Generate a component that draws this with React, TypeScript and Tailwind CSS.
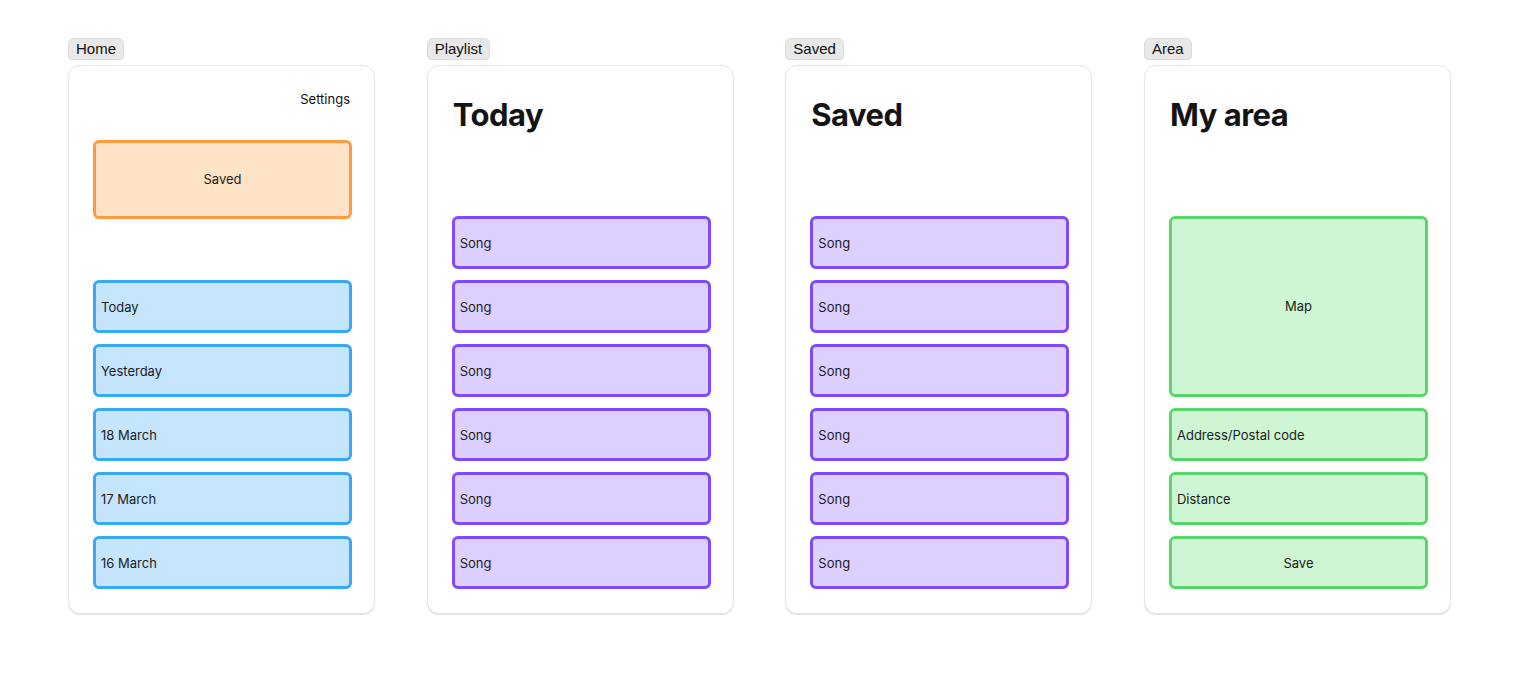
const font = { fontFamily: "Inter, 'Noto Sans', sans-serif" }

function Label({ text }: { text: string }) {
  return (
    <div
      className="self-start h-[22px] px-[7px] flex items-center rounded-t-[6px] rounded-b-[4px] bg-[#e8e8e8] border border-[#dcdcdc] text-[15px] text-[#111]"
      style={{ fontFamily: "'Liberation Sans', Arial, sans-serif" }}
    >
      {text}
    </div>
  )
}

function Box({
  children,
  tone,
  className = "",
}: {
  children: React.ReactNode
  tone: "orange" | "blue" | "purple" | "green"
  className?: string
}) {
  const tones = {
    orange: "border-[#ff9b3d] bg-[#ffe3c6]",
    blue: "border-[#36a9f9] bg-[#c4e5fd]",
    purple: "border-[#8048ff] bg-[#ddd0ff]",
    green: "border-[#5ad66a] bg-[#cef5d4]",
  }
  return (
    <div className={`border-[3px] rounded-[6px] text-[13px] text-[#1c1c1c] flex items-center ${tones[tone]} ${className}`}>
      {children}
    </div>
  )
}

function Row({ text, tone }: { text: string; tone: "blue" | "purple" | "green" }) {
  return (
    <Box tone={tone} className="h-[53px] px-[5px] pt-[2px]">
      {text}
    </Box>
  )
}

function Frame({ label, children }: { label: string; children: React.ReactNode }) {
  return (
    <div className="flex flex-col gap-[5px] w-[307px] shrink-0">
      <Label text={label} />
      <div className="h-[549px] rounded-[12px] border border-[#e6e6e6] shadow-[0_1px_1px_rgba(0,0,0,0.12)] bg-white pl-[24px] pr-[22px] pt-[25px] pb-[24px] flex flex-col" style={font}>
        {children}
      </div>
    </div>
  )
}

function Heading({ text }: { text: string }) {
  return <h1 className="text-[31px] font-bold leading-[48px] text-[#141414] pl-[1px] tracking-[-0.5px]">{text}</h1>
}

export default function App() {
  const days = ["Today", "Yesterday", "18 March", "17 March", "16 March"]
  const songs = ["Song", "Song", "Song", "Song", "Song", "Song"]
  return (
    <div className="w-[1520px] h-[679px] bg-white flex gap-[51.67px] pl-[68px] pt-[38px]">
      <Frame label="Home">
        <div className="text-[13px] text-[#111] text-right leading-[16px] pr-[2px]">Settings</div>
        <Box tone="orange" className="mt-[33px] h-[79px] justify-center">
          Saved
        </Box>
        <div className="mt-auto flex flex-col gap-[11px]">
          {days.map((d) => (
            <Row key={d} text={d} tone="blue" />
          ))}
        </div>
      </Frame>
      <Frame label="Playlist">
        <Heading text="Today" />
        <div className="mt-auto flex flex-col gap-[11px]">
          {songs.map((s, i) => (
            <Row key={i} text={s} tone="purple" />
          ))}
        </div>
      </Frame>
      <Frame label="Saved">
        <Heading text="Saved" />
        <div className="mt-auto flex flex-col gap-[11px]">
          {songs.map((s, i) => (
            <Row key={i} text={s} tone="purple" />
          ))}
        </div>
      </Frame>
      <Frame label="Area">
        <Heading text="My area" />
        <div className="mt-auto flex flex-col gap-[11px]">
          <Box tone="green" className="h-[181px] justify-center">
            Map
          </Box>
          <Row text="Address/Postal code" tone="green" />
          <Row text="Distance" tone="green" />
          <Box tone="green" className="h-[53px] justify-center pt-[2px]">
            Save
          </Box>
        </div>
      </Frame>
    </div>
  )
}
